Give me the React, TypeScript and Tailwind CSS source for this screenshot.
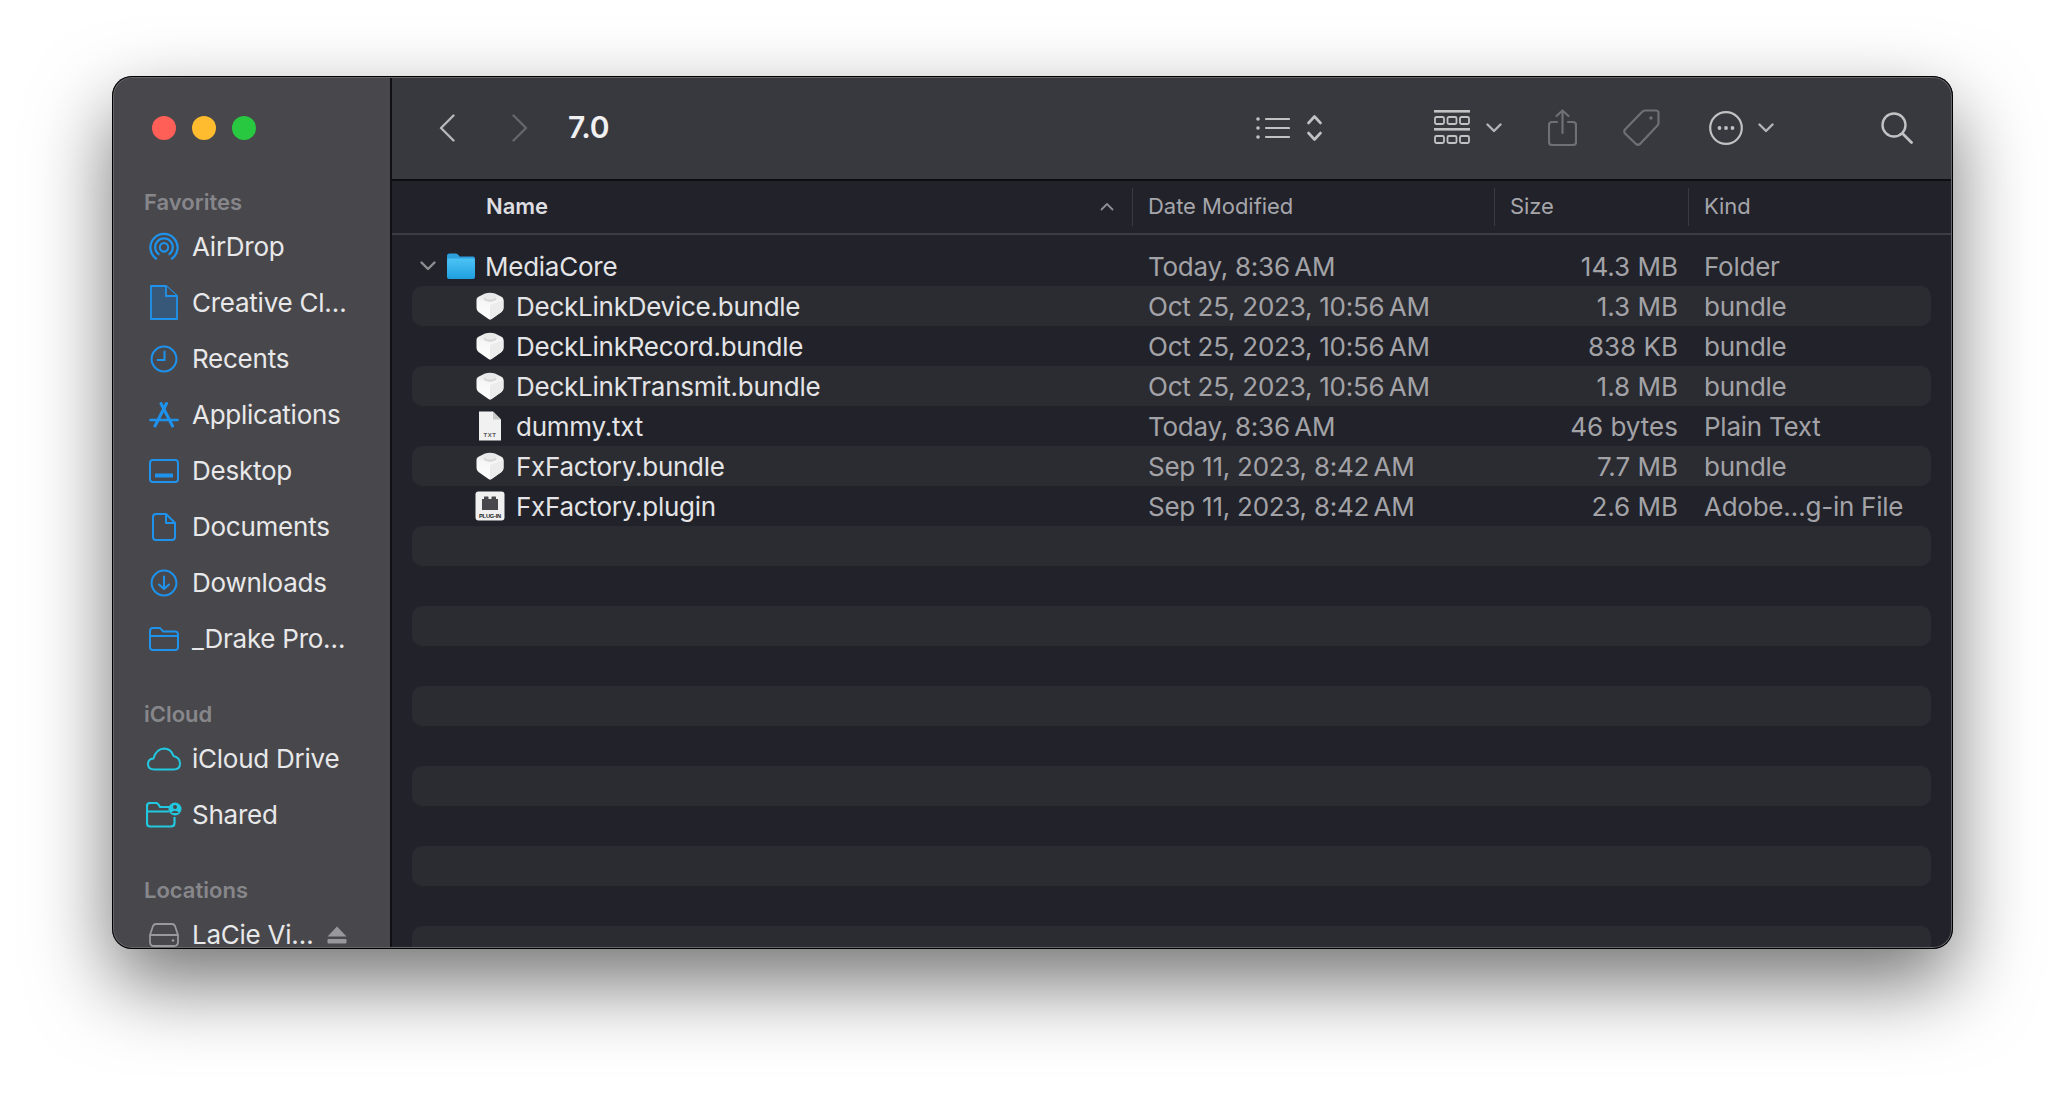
import React from "react";

function Chevron({ className, color = "#b5b5b8", w = 16, h = 10 }: { className?: string; color?: string; w?: number; h?: number }) {
  return (
    <svg className={className} width={w} height={h} viewBox="0 0 16 10" fill="none">
      <path d="M1.5 1.5 L8 8 L14.5 1.5" stroke={color} strokeWidth="2.4" strokeLinecap="round" strokeLinejoin="round" />
    </svg>
  );
}

function Cube() {
  return (
    <svg width="28" height="28" viewBox="0 0 28 28">
      <defs>
        <linearGradient id="cubeTop" x1="0" y1="0" x2="0" y2="1">
          <stop offset="0" stopColor="#e6e6e6" />
          <stop offset="0.35" stopColor="#f6f6f6" />
          <stop offset="1" stopColor="#ffffff" />
        </linearGradient>
      </defs>
      <path d="M9 1.5 Q14 0 19 1.5 L26 5 Q27.5 6 27.5 8 L27.5 16 Q27.5 18.5 25.5 20 L15.5 27 Q14 28 12.5 27 L2.5 20 Q0.5 18.5 0.5 16 L0.5 8 Q0.5 6 2 5 Z" fill="url(#cubeTop)" />
      <ellipse cx="14" cy="6.5" rx="6.5" ry="3.2" fill="#d6d6d6" />
      <ellipse cx="14" cy="5.2" rx="5.5" ry="2.4" fill="#e8e8e8" />
      <path d="M14 13 L27.5 8 L27.5 16 Q27.5 18.5 25.5 20 L15.5 27 L14 27.5 Z" fill="#ececec" />
    </svg>
  );
}

function TxtIcon() {
  return (
    <svg width="24" height="30" viewBox="0 0 24 30">
      <path d="M1 0.5 H15 L23 8.5 V29.5 H1 Z" fill="#f1f1f1" />
      <path d="M15 0.5 L23 8.5 H15 Z" fill="#c9c9c9" />
      <text x="12" y="26" textAnchor="middle" fontSize="6" fontWeight="700" fill="#555" fontFamily="Liberation Sans, sans-serif" letterSpacing="0.6">TXT</text>
    </svg>
  );
}

function PluginIcon() {
  return (
    <svg width="30" height="30" viewBox="0 0 30 30">
      <rect x="0.5" y="0.5" width="29" height="29" rx="3" fill="#f0f0f0" />
      <rect x="7" y="8" width="16" height="11" fill="#48484c" />
      <rect x="9" y="5.5" width="4.5" height="3" rx="0.5" fill="#48484c" />
      <rect x="16.5" y="5.5" width="4.5" height="3" rx="0.5" fill="#48484c" />
      <text x="15" y="27" textAnchor="middle" fontSize="6.2" fontWeight="700" fill="#222" fontFamily="Liberation Sans, sans-serif" textLength="22" lengthAdjust="spacingAndGlyphs">PLUG-IN</text>
    </svg>
  );
}

function FolderBlue() {
  return (
    <svg width="30" height="28" viewBox="0 0 30 28">
      <defs>
        <linearGradient id="fb" x1="0" y1="0" x2="0" y2="1">
          <stop offset="0" stopColor="#4cc3f4" />
          <stop offset="1" stopColor="#1f9fe0" />
        </linearGradient>
      </defs>
      <path d="M1 4 Q1 1.5 3.5 1.5 H10 Q11.5 1.5 12.5 3 L13.5 4.5 H27 Q29 4.5 29 6.5 V8 H1 Z" fill="#2c9fdc" />
      <rect x="1" y="6.5" width="28" height="20.5" rx="2" fill="url(#fb)" />
    </svg>
  );
}

const B = "#1e93ee";
const T = "#22c8e0";

const icons: Record<string, React.ReactNode> = {
  airdrop: (
    <svg width="30" height="30" viewBox="0 0 30 30" fill="none" stroke={B} strokeWidth="2.2" strokeLinecap="round">
      <path d="M7 26.5 A13.6 13.6 0 1 1 23 26.5" />
      <path d="M9.6 22.2 A8.8 8.8 0 1 1 20.4 22.2" />
      <path d="M12.2 18.4 A4.2 4.2 0 1 1 17.8 18.4 A4.2 4.2 0 0 1 12.2 18.4 Z" strokeWidth="2" />
    </svg>
  ),
  doc: (
    <svg width="30" height="36" viewBox="0 0 30 36" fill="none">
      <path d="M2 1 H17 L28 11 V34 H2 Z" fill="#38587a" stroke={B} strokeWidth="1.8" />
      <path d="M17 1 V11 H28" fill="#4a4a4e" stroke={B} strokeWidth="1.8" />
    </svg>
  ),
  clock: (
    <svg width="28" height="28" viewBox="0 0 28 28" fill="none" stroke={B} strokeWidth="2" strokeLinecap="round">
      <circle cx="14" cy="14" r="12.4" />
      <path d="M14.5 6.5 V15 H7.5" />
    </svg>
  ),
  apps: (
    <svg width="30" height="26" viewBox="0 0 30 26" fill="none" stroke={B} strokeWidth="3" strokeLinecap="round">
      <path d="M12 1.5 L23.5 24" />
      <path d="M17.5 1.5 L6 24" />
      <path d="M1.5 18 H28.5" strokeWidth="2.6" />
    </svg>
  ),
  desktop: (
    <svg width="30" height="24" viewBox="0 0 30 24" fill="none">
      <rect x="1" y="1" width="28" height="22" rx="3" stroke={B} strokeWidth="2" />
      <rect x="6" y="14.5" width="18" height="4" rx="0.5" fill={B} />
    </svg>
  ),
  documents: (
    <svg width="24" height="28" viewBox="0 0 24 28" fill="none" stroke={B} strokeWidth="2" strokeLinejoin="round">
      <path d="M4 1 H14 L23 10 V24 Q23 27 20 27 H4 Q1 27 1 24 V4 Q1 1 4 1 Z" />
      <path d="M14 1 V10 H23" />
    </svg>
  ),
  downloads: (
    <svg width="28" height="28" viewBox="0 0 28 28" fill="none" stroke={B} strokeWidth="2" strokeLinecap="round" strokeLinejoin="round">
      <circle cx="14" cy="14" r="12.4" />
      <path d="M14 7.5 V20 M9 15.5 L14 20 L19 15.5" />
    </svg>
  ),
  folder: (
    <svg width="30" height="24" viewBox="0 0 30 24" fill="none" stroke={B} strokeWidth="2" strokeLinejoin="round">
      <path d="M1 4 Q1 1 4 1 H10 Q11.5 1 12.5 2.5 L14 4.5 H26 Q29 4.5 29 7.5 V20 Q29 23 26 23 H4 Q1 23 1 20 Z" />
      <path d="M1 9 H29" />
    </svg>
  ),
  cloud: (
    <svg width="34" height="24" viewBox="0 0 34 24" fill="none" stroke={T} strokeWidth="2" strokeLinejoin="round">
      <path d="M7.5 22.5 Q1 22.5 1 17 Q1 12 6.5 11.5 Q9 2 17 1.5 Q24 1.5 26.5 9 Q33 10.5 33 16.5 Q33 22.5 26.5 22.5 Z" />
    </svg>
  ),
  shared: (
    <svg width="36" height="26" viewBox="0 0 36 26" fill="none">
      <path d="M24 5 H14 L12.5 2.5 Q11.5 1 10 1 H4 Q1 1 1 4 V21 Q1 24.5 4 24.5 H25 Q28.5 24.5 28.5 21 V15" stroke={T} strokeWidth="2.2" />
      <path d="M1 9.5 H23" stroke={T} strokeWidth="2.2" />
      <circle cx="29" cy="7" r="6.5" fill={T} />
      <circle cx="29" cy="5" r="2" fill="#48484c" />
      <path d="M25 11 Q29 6.5 33 11 Z" fill="#48484c" />
    </svg>
  ),
  hd: (
    <svg width="30" height="24" viewBox="0 0 30 24" fill="none" stroke="#9a9a9e" strokeWidth="1.8" strokeLinejoin="round">
      <path d="M7 1 H23 Q25 1 26 3 L29 12 V19 Q29 23 25 23 H5 Q1 23 1 19 V12 L4 3 Q5 1 7 1 Z" />
      <path d="M1.5 12 H28.5" />
      <circle cx="24" cy="17.5" r="1.3" fill="#9a9a9e" stroke="none" />
    </svg>
  ),
};

function SideLabel({ children, className }: { children: React.ReactNode; className?: string }) {
  return <div className={`h-[30px] pl-[32px] text-[22px] leading-[30px] font-semibold text-[#87878b] ${className ?? ""}`}>{children}</div>;
}

function SideItem({ icon, label, trailing }: { icon: string; label: string; trailing?: React.ReactNode }) {
  return (
    <div className="h-[56px] flex items-center shrink-0">
      <div className="w-[80px] pl-[23px] shrink-0 flex justify-center">{icons[icon]}</div>
      <div className="text-[26px] leading-[56px] text-[#e8e8ea] tracking-[-0.25px] whitespace-nowrap">{label}</div>
      {trailing}
    </div>
  );
}

const rows = [
  { name: "DeckLinkDevice.bundle", date: "Oct 25, 2023, 10:56\u202FAM", size: "1.3 MB", kind: "bundle", icon: <Cube /> },
  { name: "DeckLinkRecord.bundle", date: "Oct 25, 2023, 10:56\u202FAM", size: "838 KB", kind: "bundle", icon: <Cube /> },
  { name: "DeckLinkTransmit.bundle", date: "Oct 25, 2023, 10:56\u202FAM", size: "1.8 MB", kind: "bundle", icon: <Cube /> },
  { name: "dummy.txt", date: "Today, 8:36\u202FAM", size: "46 bytes", kind: "Plain Text", icon: <TxtIcon /> },
  { name: "FxFactory.bundle", date: "Sep 11, 2023, 8:42\u202FAM", size: "7.7 MB", kind: "bundle", icon: <Cube /> },
  { name: "FxFactory.plugin", date: "Sep 11, 2023, 8:42\u202FAM", size: "2.6 MB", kind: "Adobe…g-in File", icon: <PluginIcon /> },
];

function Cols({ striped, name, date, size, kind }: { striped: boolean; name: React.ReactNode; date: string; size: string; kind: string }) {
  return (
    <div className={`h-[40px] shrink-0 rounded-[10px] grid grid-cols-[736px_300px_230px_1fr] items-center text-[26px] tracking-[-0.25px] whitespace-nowrap ${striped ? "bg-[#2b2c32]" : ""}`}>
      <div className="flex items-center text-[#e4e4e6]">{name}</div>
      <div className="text-[#a3a3a7]">{date}</div>
      <div className="text-right text-[#a3a3a7] tracking-[0px]">{size}</div>
      <div className="pl-[26px] text-[#a3a3a7]">{kind}</div>
    </div>
  );
}

export default function App() {
  return (
    <div className="w-[2064px] h-[1096px] bg-white pl-[112px] pt-[76px] overflow-hidden font-['Inter',sans-serif]">
      <div className="relative w-[1841px] h-[873px] rounded-[20px] overflow-hidden flex shadow-[0_34px_80px_rgba(0,0,0,0.55)] bg-[#21222a]">
        <aside className="w-[280px] shrink-0 bg-[#48484c] border-r-2 border-[#101014] flex flex-col overflow-hidden">
          <div className="pt-[40px] pl-[40px] flex gap-[16px]">
            <span className="w-[24px] h-[24px] rounded-full bg-[#ff5f57]" />
            <span className="w-[24px] h-[24px] rounded-full bg-[#febc2e]" />
            <span className="w-[24px] h-[24px] rounded-full bg-[#28c840]" />
          </div>
          <SideLabel className="mt-[47px] mb-[2px]">Favorites</SideLabel>
          <SideItem icon="airdrop" label="AirDrop" />
          <SideItem icon="doc" label="Creative Cl…" />
          <SideItem icon="clock" label="Recents" />
          <SideItem icon="apps" label="Applications" />
          <SideItem icon="desktop" label="Desktop" />
          <SideItem icon="documents" label="Documents" />
          <SideItem icon="downloads" label="Downloads" />
          <SideItem icon="folder" label="_Drake Pro…" />
          <SideLabel className="mt-[32px] mb-[2px]">iCloud</SideLabel>
          <SideItem icon="cloud" label="iCloud Drive" />
          <SideItem icon="shared" label="Shared" />
          <SideLabel className="mt-[32px] mb-[2px]">Locations</SideLabel>
          <SideItem
            icon="hd"
            label="LaCie Vi…"
            trailing={
              <svg className="ml-[13px] shrink-0" width="20" height="18" viewBox="0 0 20 18" fill="#98989c">
                <path d="M10 0.5 L19.5 10.5 H0.5 Z" />
                <rect x="0.5" y="13" width="19" height="4.5" rx="1" />
              </svg>
            }
          />
        </aside>

        <main className="flex-1 flex flex-col min-w-0">
          <header className="h-[105px] shrink-0 bg-[#38383f] border-b-2 border-[#0e0e12] flex items-center pl-[47px] pr-[40px]">
            <svg width="16" height="28" viewBox="0 0 16 28" fill="none">
              <path d="M14.5 1.5 L2 14 L14.5 26.5" stroke="#b8b8bb" strokeWidth="2.4" strokeLinecap="round" strokeLinejoin="round" />
            </svg>
            <svg className="ml-[57px]" width="16" height="28" viewBox="0 0 16 28" fill="none">
              <path d="M1.5 1.5 L14 14 L1.5 26.5" stroke="#65656a" strokeWidth="2.4" strokeLinecap="round" strokeLinejoin="round" />
            </svg>
            <div className="ml-[40px] flex-1 text-[30px] font-semibold text-[#f0f0f2] tracking-[-0.3px]">7.0</div>
            <svg width="34" height="22" viewBox="0 0 34 22" fill="none" stroke="#c2c2c5" strokeLinecap="round">
              <path d="M10 2 H33 M10 11 H33 M10 20 H33" strokeWidth="2.2" />
              <circle cx="2" cy="2" r="1.8" fill="#c2c2c5" stroke="none" />
              <circle cx="2" cy="11" r="1.8" fill="#c2c2c5" stroke="none" />
              <circle cx="2" cy="20" r="1.8" fill="#c2c2c5" stroke="none" />
            </svg>
            <svg className="ml-[17px]" width="15" height="26" viewBox="0 0 15 26" fill="none" stroke="#c2c2c5" strokeWidth="2.6" strokeLinecap="round" strokeLinejoin="round">
              <path d="M1.5 8 L7.5 1.5 L13.5 8" />
              <path d="M1.5 18 L7.5 24.5 L13.5 18" />
            </svg>
            <svg className="ml-[112px]" width="36" height="35" viewBox="0 0 36 35" fill="none" stroke="#c2c2c5">
              <rect x="0" y="0" width="36" height="2.6" fill="#c2c2c5" stroke="none" />
              <rect x="0" y="18" width="36" height="2.6" fill="#c2c2c5" stroke="none" />
              <rect x="1" y="7" width="9" height="7" rx="1.5" strokeWidth="1.8" />
              <rect x="13.5" y="7" width="9" height="7" rx="1.5" strokeWidth="1.8" />
              <rect x="26" y="7" width="9" height="7" rx="1.5" strokeWidth="1.8" />
              <rect x="1" y="26" width="9" height="7" rx="1.5" strokeWidth="1.8" />
              <rect x="13.5" y="26" width="9" height="7" rx="1.5" strokeWidth="1.8" />
              <rect x="26" y="26" width="9" height="7" rx="1.5" strokeWidth="1.8" />
            </svg>
            <Chevron className="ml-[16px]" />
            <svg className="ml-[46px]" width="29" height="37" viewBox="0 0 29 37" fill="none" stroke="#6f6f74" strokeWidth="2.2" strokeLinecap="round" strokeLinejoin="round">
              <path d="M14.5 1.5 V24 M8.5 7 L14.5 1.5 L20.5 7" />
              <path d="M9 13 H4 Q1 13 1 16 V33 Q1 36 4 36 H25 Q28 36 28 33 V16 Q28 13 25 13 H20" />
            </svg>
            <svg className="ml-[46px]" width="37" height="37" viewBox="0 0 37 37" fill="none" stroke="#6f6f74" strokeWidth="2.2" strokeLinejoin="round">
              <path d="M22 1.5 H33 Q35.5 1.5 35.5 4 V14 Q35.5 15.5 34 17 L17 35 Q15 36.5 13 35 L2 24.5 Q0.5 22.5 2 20.5 L19 3 Q20.5 1.5 22 1.5 Z" />
              <circle cx="28" cy="9" r="1.7" fill="#6f6f74" stroke="none" />
            </svg>
            <svg className="ml-[49px]" width="34" height="34" viewBox="0 0 34 34" fill="none">
              <circle cx="17" cy="17" r="15.8" stroke="#c2c2c5" strokeWidth="2.2" />
              <circle cx="10.5" cy="17" r="1.9" fill="#c2c2c5" />
              <circle cx="17" cy="17" r="1.9" fill="#c2c2c5" />
              <circle cx="23.5" cy="17" r="1.9" fill="#c2c2c5" />
            </svg>
            <Chevron className="ml-[15px]" />
            <svg className="ml-[107px]" width="32" height="32" viewBox="0 0 32 32" fill="none" stroke="#c2c2c5" strokeWidth="2.4" strokeLinecap="round">
              <circle cx="13" cy="13" r="11.5" />
              <path d="M21.5 21.5 L30.5 30.5" strokeWidth="2.8" />
            </svg>
          </header>

          <div className="h-[54px] shrink-0 border-b-2 border-[#3c3d43] flex items-center text-[22px] text-[#a6a6aa] tracking-[-0.05px]">
            <div className="w-[741px] h-[38px] shrink-0 border-r border-[#3a3b41] flex items-center pl-[94px] pb-[2px]">
              <span className="flex-1 font-semibold text-[#dedee0]">Name</span>
              <svg className="mr-[18px]" width="14" height="9" viewBox="0 0 14 9" fill="none">
                <path d="M1.5 7.5 L7 2 L12.5 7.5" stroke="#8e8e92" strokeWidth="1.8" strokeLinecap="round" strokeLinejoin="round" />
              </svg>
            </div>
            <div className="w-[362px] h-[38px] shrink-0 border-r border-[#3a3b41] flex items-center pl-[15px] pb-[2px]">Date Modified</div>
            <div className="w-[194px] h-[38px] shrink-0 border-r border-[#3a3b41] flex items-center pl-[15px] pb-[2px]">Size</div>
            <div className="flex-1 pl-[15px] pb-[2px]">Kind</div>
          </div>

          <div className="flex-1 min-h-0 overflow-hidden pl-[20px] pr-[22px] pt-[11px] flex flex-col">
            <Cols
              striped={false}
              date={"Today, 8:36\u202FAM"}
              size="14.3 MB"
              kind="Folder"
              name={
                <>
                  <Chevron className="ml-[8px] shrink-0" color="#8e8e92" />
                  <span className="ml-[10px] shrink-0 flex"><FolderBlue /></span>
                  <span className="ml-[9px]">MediaCore</span>
                </>
              }
            />
            {rows.map((r, i) => (
              <Cols
                key={r.name}
                striped={i % 2 === 0}
                date={r.date}
                size={r.size}
                kind={r.kind}
                name={
                  <>
                    <span className="ml-[62px] w-[32px] shrink-0 flex justify-center">{r.icon}</span>
                    <span className="ml-[10px]">{r.name}</span>
                  </>
                }
              />
            ))}
            {[0, 1, 2, 3, 4, 5, 6, 7, 8, 9, 10, 11].map((i) => (
              <div key={i} className={`h-[40px] shrink-0 rounded-[10px] ${i % 2 === 0 ? "bg-[#2b2c32]" : ""}`} />
            ))}
          </div>
        </main>

        <div className="absolute inset-0 rounded-[20px] border border-black shadow-[inset_0_0_0_1px_#66666a] pointer-events-none" />
      </div>
    </div>
  );
}
